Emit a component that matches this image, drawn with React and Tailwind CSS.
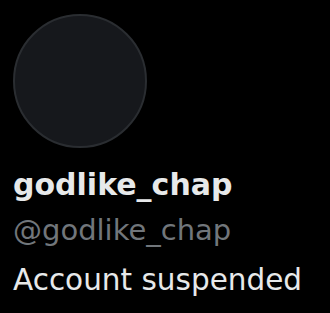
const App = () => {
  return (
    <div
      className="min-h-screen w-full bg-black px-[13px] pt-[14px] overflow-hidden"
      style={{ fontFamily: '"DejaVu Sans", sans-serif' }}
    >
      {/* avatar */}
      <div className="w-[134px] h-[134px] rounded-full bg-[#16181c] border-2 border-[#2a2d31]" />

      <div className="mt-[19px] flex flex-col">
        <span className="text-[30px] leading-[36px] font-bold text-[#e7e9ea]">godlike_chap</span>
        <span className="mt-[9px] text-[29px] leading-[36px] text-[#71767b]">@godlike_chap</span>
        <span className="mt-[14px] text-[29.5px] leading-[36px] text-[#e7e9ea]">Account suspended</span>
      </div>
    </div>
  )
}

export default App
